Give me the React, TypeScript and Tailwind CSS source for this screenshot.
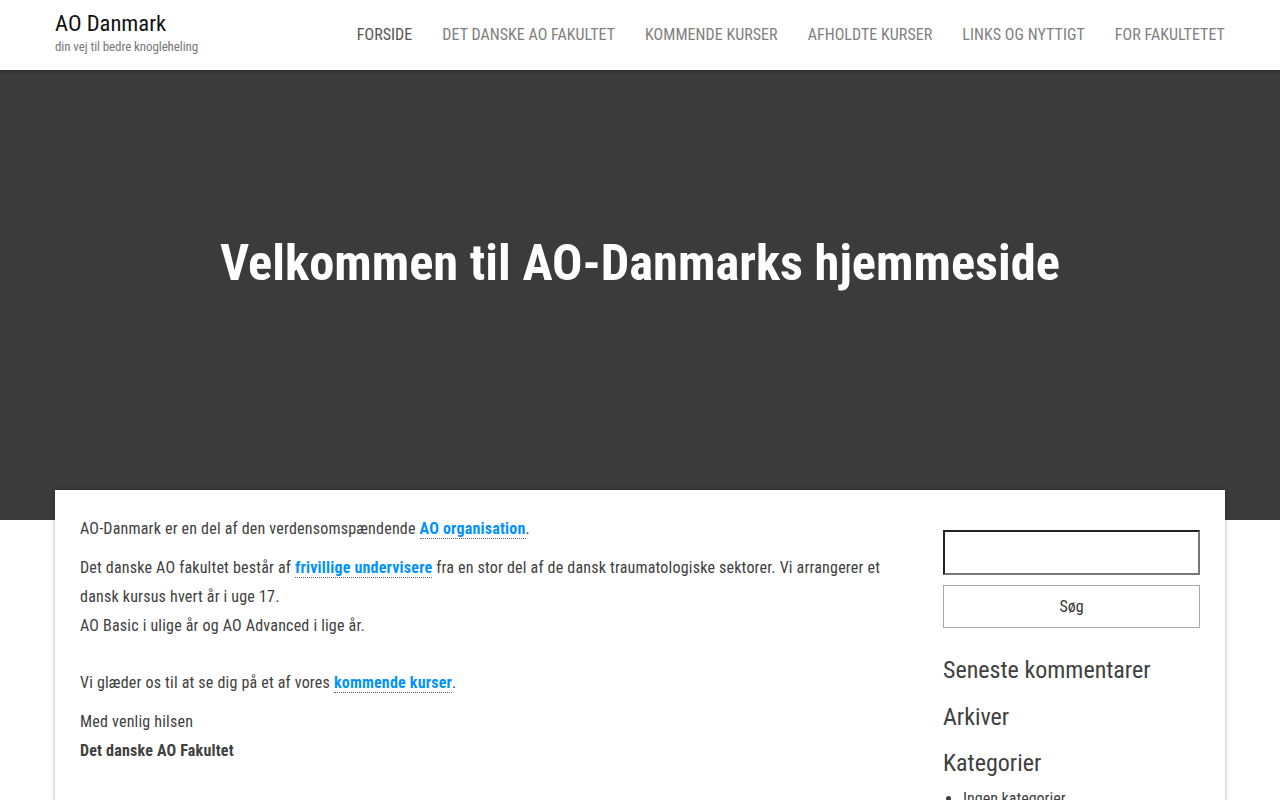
import React from "react";

const font = { fontFamily: '"Roboto Condensed", "Roboto", "Liberation Sans", sans-serif' };

function Link({ children }: { children: React.ReactNode }) {
  return (
    <a className="font-bold text-[#0092ff] border-b border-dotted border-[#666]" href="#">
      {children}
    </a>
  );
}

export default function App() {
  const nav = [
    "FORSIDE",
    "DET DANSKE AO FAKULTET",
    "KOMMENDE KURSER",
    "AFHOLDTE KURSER",
    "LINKS OG NYTTIGT",
    "FOR FAKULTETET",
  ];
  return (
    <div style={font} className="min-h-[800px] bg-white text-[#404040]">
      <header className="relative z-10 h-[70px] bg-white shadow-[0_1px_4px_rgba(0,0,0,0.25)] flex items-start justify-between px-[55px]">
        <div className="pt-[10px]">
          <div className="text-[22.6px] leading-[28px] text-[#111]">AO Danmark</div>
          <div className="text-[13px] leading-[18px] text-[#777] tracking-[-0.1px]">din vej til bedre knogleheling</div>
        </div>
        <nav className="flex gap-[30px] pt-[24px] tracking-[0.05px]">
          {nav.map((n, i) => (
            <a
              key={n}
              href="#"
              className={`text-[16px] leading-[22px] ${i === 0 ? "text-[#555]" : "text-[#808080]"}`}
            >
              {n}
            </a>
          ))}
        </nav>
      </header>
      <section className="h-[450px] bg-[#3b3b3b] flex items-center justify-center pb-[64px]">
        <h1 className="text-white font-bold text-[50.5px] leading-[60px]">Velkommen til AO-Danmarks hjemmeside</h1>
      </section>
      <div className="px-[55px] -mt-[30px] relative">
        <div className="bg-white shadow-[0_0_4px_rgba(0,0,0,0.35)] min-h-[340px] px-[25px] pt-[24px] flex gap-[40px]">
          <main className="flex-1 text-[16px] leading-[29px] tracking-[0.2px]">
            <p className="mb-[10px]">
              AO-Danmark er en del af den verdensomspændende <Link>AO organisation</Link>.
            </p>
            <p className="mb-[10px] max-w-[810px]">
              Det danske AO fakultet består af <Link>frivillige undervisere</Link> fra en stor del af de dansk
              traumatologiske sektorer. Vi arrangerer et dansk kursus hvert år i uge 17.
              <br />
              AO Basic i ulige år og AO Advanced i lige år.
              <br />
              &nbsp;
            </p>
            <p className="mb-[10px] -mt-[11px]">
              Vi glæder os til at se dig på et af vores <Link>kommende kurser</Link>.
            </p>
            <p className="mb-[10px]">
              Med venlig hilsen
              <br />
              <strong>Det danske AO Fakultet</strong>
            </p>
          </main>
          <aside className="w-[257px] shrink-0 pt-[16px]">
            <input
              className="block w-full h-[45px] border-2 border-[#222] border-r-[#777] border-b-[#777] outline-none"
              style={font}
            />
            <button
              className="mt-[10px] w-full h-[43px] border border-[#aaa] text-[16px] text-[#333] bg-white"
              style={font}
            >
              Søg
            </button>
            <h2 className="mt-[26px] text-[24px] leading-[32px] text-[#404040]">Seneste kommentarer</h2>
            <h2 className="mt-[15px] text-[24px] leading-[32px] text-[#404040]">Arkiver</h2>
            <h2 className="mt-[14px] text-[24px] leading-[32px] text-[#404040]">Kategorier</h2>
            <ul className="mt-[8px] list-disc pl-[20px] text-[16px] leading-[24px]">
              <li>Ingen kategorier</li>
            </ul>
          </aside>
        </div>
      </div>
    </div>
  );
}
